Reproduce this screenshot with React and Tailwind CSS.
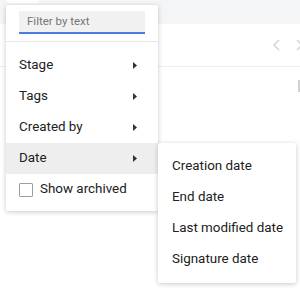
import { useState } from 'react';

const filters = ['Stage', 'Tags', 'Created by', 'Date'];
const dateFields = ['Creation date', 'End date', 'Last modified date', 'Signature date'];

const Caret = () => (
  <svg width="4" height="7" viewBox="0 0 4 7" className="shrink-0">
    <path d="M0 0 L4 3.5 L0 7 Z" fill="#333" />
  </svg>
);

const App = () => {
  const [active] = useState('Date');

  return (
    <div
      className="relative w-[300px] h-[290px] overflow-hidden bg-white text-[#212121]"
      style={{ fontFamily: 'Roboto, "Liberation Sans", sans-serif' }}
    >
      {/* page behind the menu */}
      <div className="h-[24px] bg-[#f4f5f7] relative">
        <div className="absolute left-[7px] top-0 w-[32px] h-[3px] bg-white" />
      </div>
      <div className="h-[43px] border-b border-[#eeeeee] flex items-center justify-end gap-[16px] text-[#d6d6d6]">
        <svg width="8" height="12" viewBox="0 0 8 12">
          <path d="M7 1 L2 6 L7 11" fill="none" stroke="currentColor" strokeWidth="1.6" />
        </svg>
        <svg width="6" height="12" viewBox="0 0 6 12" className="-mr-[2px]">
          <path d="M1 1 L6 6 L1 11" fill="none" stroke="currentColor" strokeWidth="1.6" />
        </svg>
      </div>
      <div className="flex justify-end pt-[13px]">
        <div className="w-[2px] h-[12px] bg-[#d0d0d0]" />
      </div>

      {/* filter menu */}
      <div className="absolute left-[6px] top-[5px] w-[152px] bg-white rounded-[2px] shadow-[0_1px_5px_rgba(0,0,0,0.22)] pb-[6px]">
        <div className="px-[13px] pt-[6px] pb-[7px] border-b border-[#e6e6e6]">
          <div className="h-[23px] bg-[#f1f1f1] border-b-2 border-[#4a7de2] flex items-center px-[8px] text-[11.5px] text-[#767676]">
            Filter by text
          </div>
        </div>
        <ul className="pt-[8px]">
          {filters.map((f) => (
            <li
              key={f}
              className={`h-[31px] flex items-center justify-between pl-[13px] pr-[21px] text-[13.4px] ${
                f === active ? 'bg-[#eeeeee]' : ''
              }`}
            >
              <span>{f}</span>
              <Caret />
            </li>
          ))}
          <li className="h-[31px] flex items-center gap-[7px] pl-[13px] text-[13.4px]">
            <span className="w-[14px] h-[14px] border border-[#9e9e9e] rounded-[1px] bg-white" />
            <span>Show archived</span>
          </li>
        </ul>
      </div>

      {/* date submenu */}
      <div className="absolute left-[158px] top-[143px] w-[138px] bg-white rounded-[2px] shadow-[0_1px_5px_rgba(0,0,0,0.22)] py-[8px]">
        {dateFields.map((d) => (
          <div key={d} className="h-[31px] flex items-center pl-[14px] text-[13.4px]">
            {d}
          </div>
        ))}
      </div>
    </div>
  );
};

export default App;
